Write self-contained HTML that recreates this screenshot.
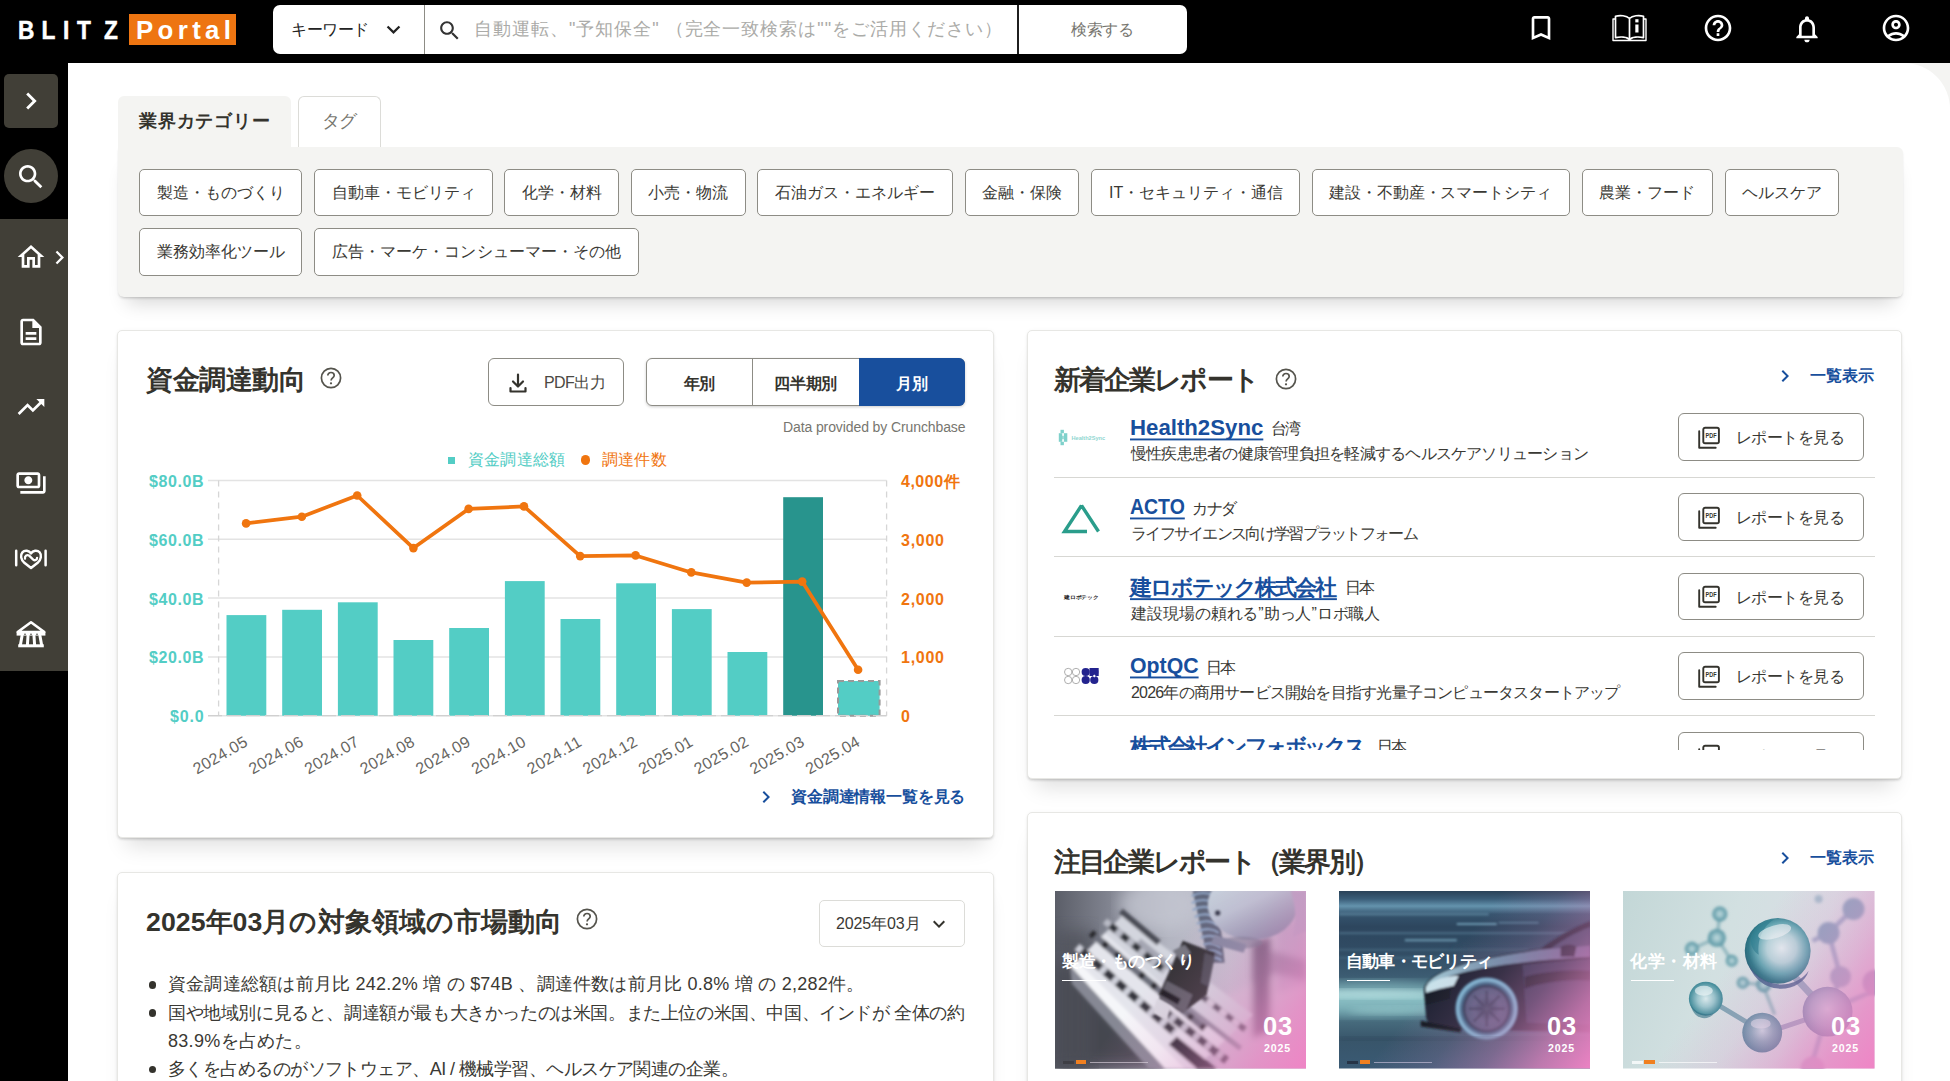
<!DOCTYPE html>
<html lang="ja">
<head>
<meta charset="utf-8">
<title>BLITZ Portal</title>
<style>
*{box-sizing:border-box;margin:0;padding:0}
html,body{width:1950px;height:1081px;overflow:hidden;background:#fff}
body{position:relative;font-family:"Liberation Sans",sans-serif;color:#3a3934;font-size:16px}
.a{position:absolute}
svg{display:block;position:absolute;overflow:visible}
svg text{white-space:pre}
.card{position:absolute;background:#fff;border:1px solid #e7e7e4;border-radius:5px;box-shadow:0 2px 3px -1px rgba(0,0,0,.2),0 17px 20px -9px rgba(0,0,0,.13),0 0 4px rgba(0,0,0,.03)}
.btn{position:absolute;border:1px solid #8d8c85;border-radius:6px;background:#fff}
</style>
</head>
<body>
<!-- ===== base layers ===== -->
<div class="a" style="left:0px;top:0px;width:1950px;height:63px;background:#000"></div>
<div class="a" style="left:0px;top:63px;width:68px;height:1018px;background:#000"></div>
<div class="a" style="left:0px;top:219px;width:68px;height:452px;background:#413f37"></div>
<div class="a" style="left:68px;top:63px;width:1882px;height:1018px;background:#f4f4f2"></div>
<div class="a" style="left:68px;top:63px;width:1882px;height:1018px;background:#fff;border-top-right-radius:46px"></div>
<!-- ===== header ===== -->
<svg style="left:0;top:0" width="130" height="63"><text transform="translate(19.700 39.400) scale(.88 1)" x="-1.900 24.700 49.200 65.200 95.800" y="0" font-family="Liberation Sans, sans-serif" font-size="25.800" font-weight="bold" fill="#fff" stroke="#fff" stroke-width=".5">BLITZ</text></svg>
<div class="a" style="left:129px;top:14.3px;width:107.3px;height:31.2px;background:#ee7511"></div>
<svg style="left:135.6px;top:11.0px" width="95.0" height="38.7"><text x="0" y="28.38" font-family="Liberation Sans, sans-serif" font-size="25.8" font-weight="bold" fill="#fff" textLength="95.0" lengthAdjust="spacing">Portal</text></svg>
<div class="a" style="left:273px;top:5px;width:914px;height:48.6px;background:#fff;border-radius:7px"></div>
<div class="a" style="left:424px;top:5px;width:1px;height:48.6px;background:#8d8c85"></div>
<div class="a" style="left:1017px;top:5px;width:2px;height:48.6px;background:#1f1f1f"></div>
<svg style="left:290.5px;top:16.8px" width="78.0" height="24.0"><text x="0" y="17.60" font-family="Liberation Sans, sans-serif" font-size="16" font-weight="normal" fill="#222" textLength="78.0" lengthAdjust="spacing">キーワード</text></svg>
<svg style="left:380.0px;top:16.1px" width="27" height="27" viewBox="0 0 24 24"><path fill="#222" d="M16.590 8.590L12 13.170 7.410 8.590 6 10l6 6 6-6z"/></svg>
<svg style="left:436.700px;top:17.700px" width="25.250" height="25.250" viewBox="0 0 24 24"><path fill="#333" d="M15.500 14h-.79l-.28-.27C15.410 12.590 16 11.110 16 9.500 16 5.910 13.090 3 9.500 3S3 5.910 3 9.500 5.910 16 9.500 16c1.610 0 3.090-.59 4.230-1.570l.27.28v.79l5 4.990L20.490 19l-4.990-5zm-6 0C7.010 14 5 11.990 5 9.500S7.010 5 9.500 5 14 7.010 14 9.500 11.990 14 9.500 14z"/></svg>
<svg style="left:474.0px;top:15.2px" width="527.9" height="27.0"><text x="0" y="19.80" font-family="Liberation Sans, sans-serif" font-size="18" font-weight="normal" fill="#ababa8" textLength="527.9" lengthAdjust="spacing">自動運転、&quot;予知保全&quot; （完全一致検索は&quot;&quot;をご活用ください）</text></svg>
<svg style="left:1070.7px;top:17.2px" width="62.6" height="24.0"><text x="0" y="17.60" font-family="Liberation Sans, sans-serif" font-size="16" font-weight="normal" fill="#77766f" textLength="62.6" lengthAdjust="spacing">検索する</text></svg>
<svg style="left:1525px;top:12px" width="32" height="32" viewBox="0 0 24 24"><path fill="#fff" d="M17 3H7c-1.100 0-1.990.9-1.990 2L5 21l7-3 7 3V5c0-1.100-.9-2-2-2zm0 15l-5-2.180L7 18V5h10v13z"/></svg>
<svg style="left:1611px;top:13px" width="37" height="30" viewBox="0 0 37 30" fill="none" stroke="#fff" stroke-width="1.700" stroke-linejoin="round"><path d="M18.500 5.500C15.500 2.500 9 2 4.500 3.200V24.600C9 23.600 15.500 23.800 18.500 26.500C21.500 23.800 28 23.600 32.500 24.600V3.200C28 2 21.500 2.500 18.500 5.500zM18.500 5.500V26.500"/><path d="M4.500 6H2V27.500H35V6H32.500" stroke-width="1.400"/><rect x="24.300" y="6.200" width="3.200" height="3.200" fill="#fff" stroke="none"/><path d="M24.300 11.500h3.200v8h-3.200z" fill="#fff" stroke="none"/></svg>
<svg style="left:1702.0px;top:12.0px" width="32" height="32" viewBox="0 0 24 24"><path fill="#fff" d="M11 18h2v-2h-2v2zm1-16C6.480 2 2 6.480 2 12s4.480 10 10 10 10-4.480 10-10S17.520 2 12 2zm0 18c-4.410 0-8-3.590-8-8s3.590-8 8-8 8 3.590 8 8-3.590 8-8 8zm0-14c-2.210 0-4 1.790-4 4h2c0-1.100.9-2 2-2s2 .9 2 2c0 2-3 1.750-3 5h2c0-2.250 3-2.500 3-5 0-2.210-1.790-4-4-4z"/></svg>
<svg style="left:1791px;top:13px" width="32" height="32" viewBox="0 0 24 24"><path fill="#fff" d="M12 22c1.100 0 2-.9 2-2h-4c0 1.100.9 2 2 2zm6-6v-5c0-3.070-1.630-5.640-4.500-6.320V4c0-.83-.67-1.500-1.500-1.500s-1.500.67-1.500 1.500v.68C7.640 5.360 6 7.920 6 11v5l-2 2v1h16v-1l-2-2zm-2 1H8v-6c0-2.480 1.510-4.500 4-4.500s4 2.020 4 4.500v6z"/></svg>
<svg style="left:1880px;top:12px" width="32" height="32" viewBox="0 0 24 24"><path fill="#fff" d="M12 2C6.480 2 2 6.480 2 12s4.480 10 10 10 10-4.480 10-10S17.520 2 12 2zM7.350 18.500C8.660 17.560 10.260 17 12 17s3.340.56 4.650 1.500c-1.310.94-2.910 1.500-4.650 1.500s-3.340-.56-4.650-1.500zm10.790-1.380C16.450 15.800 14.320 15 12 15s-4.450.8-6.140 2.120C4.700 15.730 4 13.950 4 12c0-4.420 3.580-8 8-8s8 3.580 8 8c0 1.950-.7 3.730-1.860 5.120zM12 6c-1.930 0-3.500 1.570-3.500 3.500S10.070 13 12 13s3.500-1.570 3.500-3.500S13.930 6 12 6zm0 5c-.83 0-1.500-.67-1.500-1.500S11.170 8 12 8s1.500.67 1.500 1.500S12.830 11 12 11z"/></svg>
<!-- ===== sidebar ===== -->
<div class="a" style="left:4px;top:74px;width:54px;height:54px;background:#413f37;border-radius:5px"></div>
<svg style="left:14.0px;top:84.0px" width="34" height="34" viewBox="0 0 24 24"><path fill="#fff" d="M10 6L8.590 7.410 13.170 12l-4.580 4.590L10 18l6-6z"/></svg>
<div class="a" style="left:4px;top:149px;width:54px;height:54px;background:#413f37;border-radius:50%"></div>
<svg style="left:15.0px;top:160.5px" width="32" height="32" viewBox="0 0 24 24"><path fill="#fff" d="M15.500 14h-.79l-.28-.27C15.410 12.590 16 11.110 16 9.500 16 5.910 13.090 3 9.500 3S3 5.910 3 9.500 5.910 16 9.500 16c1.610 0 3.090-.59 4.230-1.570l.27.28v.79l5 4.990L20.490 19l-4.990-5zm-6 0C7.010 14 5 11.990 5 9.500S7.010 5 9.500 5 14 7.010 14 9.500 11.990 14 9.500 14z"/></svg>
<svg style="left:15px;top:241px" width="32" height="32" viewBox="0 0 24 24"><path fill="#fff" d="M12 5.690l5 4.500V18h-2v-6H9v6H7v-7.810l5-4.500M12 3L2 12h3v8h6v-6h2v6h6v-8h3L12 3z"/></svg>
<svg style="left:46.3px;top:243.8px" width="27" height="27" viewBox="0 0 24 24"><path fill="#fff" d="M10 6L8.590 7.410 13.170 12l-4.580 4.590L10 18l6-6z"/></svg>
<svg style="left:15px;top:316px" width="32" height="32" viewBox="0 0 24 24"><path fill="#fff" d="M8 16h8v2H8zm0-4h8v2H8zm6-10H6c-1.100 0-2 .9-2 2v16c0 1.100.89 2 1.990 2H18c1.100 0 2-.9 2-2V8l-6-6zm4 18H6V4h7v5h5v11z"/></svg>
<svg style="left:15px;top:391px" width="32" height="32" viewBox="0 0 24 24"><path fill="#fff" d="M16 6l2.290 2.290-4.880 4.880-4-4L2 16.590 3.410 18l6-6 4 4 6.300-6.290L22 12V6z"/></svg>
<svg style="left:15px;top:467px" width="32" height="32" viewBox="0 0 24 24"><path fill="#fff" d="M19 14V6c0-1.100-.9-2-2-2H3c-1.100 0-2 .9-2 2v8c0 1.100.9 2 2 2h14c1.100 0 2-.9 2-2zm-2 0H3V6h14v8zm-7-7c-1.660 0-3 1.340-3 3s1.340 3 3 3 3-1.340 3-3-1.340-3-3-3zm13 0v11c0 1.100-.9 2-2 2H4v-2h17V7h2z"/></svg>
<svg style="left:0;top:540px" width="68" height="36" viewBox="0 540 68 36" fill="none" stroke="#fff" stroke-width="2.500" stroke-linecap="round" stroke-linejoin="round"><path d="M16.200 550.800V565.300M45.600 550.800V565.300"/><path d="M31 553.400C29.200 550.300 24.600 549.800 22.400 552.300 19.900 555.200 21.100 559.600 24 562.400L31 567.900 38 562.400C40.900 559.600 42.100 555.200 39.600 552.300 37.400 549.800 32.800 550.300 31 553.400"/><path d="M25 558.600C24.600 556.200 26.800 554.300 28.900 555.400L33.200 559.600C34.800 560.900 37.100 560 37.100 557.800" stroke-width="2.300"/></svg>
<svg style="left:0;top:616px" width="68" height="36" viewBox="0 616 68 36" fill="none" stroke="#fff" stroke-linejoin="round" stroke-linecap="round"><path d="M31 622.300L17.700 632H44.300Z" stroke-width="2.600"/><path d="M16.600 632.200H45.400V635.600H16.600Z" fill="#fff" stroke="none"/><path d="M22 636L20.400 645M28 636L27.400 645M34 636L34.600 645M40 636L41.600 645" stroke-width="3"/><path d="M18.200 644.300H43.800V647.300H18.200Z" fill="#fff" stroke="none"/><g fill="#413f37" stroke="none"><circle cx="25" cy="634.300" r=".8"/><circle cx="31" cy="634.300" r=".8"/><circle cx="37" cy="634.300" r=".8"/></g></svg>
<!-- ===== category tabs / panel ===== -->
<div class="a" style="left:117.5px;top:147px;width:1785px;height:150px;background:#f4f4f2;border-radius:0 6px 6px 6px;box-shadow:0 2px 3px -1px rgba(0,0,0,.2),0 15px 18px -9px rgba(0,0,0,.16)"></div>
<div class="a" style="left:117.5px;top:96px;width:173.5px;height:52px;background:#f4f4f2;border-radius:6px 6px 0 0"></div>
<div class="a" style="left:297.5px;top:96px;width:83px;height:51px;background:#fff;border:1px solid #dcdcd8;border-bottom:none;border-radius:6px 6px 0 0"></div>
<svg style="left:139.2px;top:107.3px" width="130.6" height="27.6"><text x="0" y="20.24" font-family="Liberation Sans, sans-serif" font-size="18.4" font-weight="bold" fill="#34332d" textLength="130.6" lengthAdjust="spacing">業界カテゴリー</text></svg>
<svg style="left:321.5px;top:107.9px" width="34.7" height="26.4"><text x="0" y="19.36" font-family="Liberation Sans, sans-serif" font-size="17.6" font-weight="normal" fill="#77766f" textLength="34.7" lengthAdjust="spacing">タグ</text></svg>
<div class="btn" style="left:138.8px;top:168.6px;width:163.4px;height:47.600px;border-radius:5px"></div>
<svg style="left:156.5px;top:179.6px" width="128.0" height="24.0"><text x="0" y="17.60" font-family="Liberation Sans, sans-serif" font-size="16" font-weight="normal" fill="#3a3934" textLength="128.0" lengthAdjust="spacing">製造・ものづくり</text></svg>
<div class="btn" style="left:314.2px;top:168.6px;width:178.6px;height:47.600px;border-radius:5px"></div>
<svg style="left:331.5px;top:179.6px" width="144.0" height="24.0"><text x="0" y="17.60" font-family="Liberation Sans, sans-serif" font-size="16" font-weight="normal" fill="#3a3934" textLength="144.0" lengthAdjust="spacing">自動車・モビリティ</text></svg>
<div class="btn" style="left:504.3px;top:168.6px;width:114.9px;height:47.600px;border-radius:5px"></div>
<svg style="left:521.8px;top:179.6px" width="80.0" height="24.0"><text x="0" y="17.60" font-family="Liberation Sans, sans-serif" font-size="16" font-weight="normal" fill="#3a3934" textLength="80.0" lengthAdjust="spacing">化学・材料</text></svg>
<div class="btn" style="left:630.8px;top:168.6px;width:114.9px;height:47.600px;border-radius:5px"></div>
<svg style="left:648.2px;top:179.6px" width="80.0" height="24.0"><text x="0" y="17.60" font-family="Liberation Sans, sans-serif" font-size="16" font-weight="normal" fill="#3a3934" textLength="80.0" lengthAdjust="spacing">小売・物流</text></svg>
<div class="btn" style="left:757.2px;top:168.6px;width:195.7px;height:47.600px;border-radius:5px"></div>
<svg style="left:775.0px;top:179.6px" width="160.0" height="24.0"><text x="0" y="17.60" font-family="Liberation Sans, sans-serif" font-size="16" font-weight="normal" fill="#3a3934" textLength="160.0" lengthAdjust="spacing">石油ガス・エネルギー</text></svg>
<div class="btn" style="left:965.0px;top:168.6px;width:114.4px;height:47.600px;border-radius:5px"></div>
<svg style="left:982.2px;top:179.6px" width="80.0" height="24.0"><text x="0" y="17.60" font-family="Liberation Sans, sans-serif" font-size="16" font-weight="normal" fill="#3a3934" textLength="80.0" lengthAdjust="spacing">金融・保険</text></svg>
<div class="btn" style="left:1091.1px;top:168.6px;width:209.0px;height:47.600px;border-radius:5px"></div>
<svg style="left:1108.8px;top:179.6px" width="173.5" height="24.0"><text x="0" y="17.60" font-family="Liberation Sans, sans-serif" font-size="16" font-weight="normal" fill="#3a3934" textLength="173.5" lengthAdjust="spacing">IT・セキュリティ・通信</text></svg>
<div class="btn" style="left:1311.8px;top:168.6px;width:258.2px;height:47.600px;border-radius:5px"></div>
<svg style="left:1329.4px;top:179.6px" width="223.0" height="24.0"><text x="0" y="17.60" font-family="Liberation Sans, sans-serif" font-size="16" font-weight="normal" fill="#3a3934" textLength="223.0" lengthAdjust="spacing">建設・不動産・スマートシティ</text></svg>
<div class="btn" style="left:1581.7px;top:168.6px;width:131.1px;height:47.600px;border-radius:5px"></div>
<svg style="left:1599.2px;top:179.6px" width="96.0" height="24.0"><text x="0" y="17.60" font-family="Liberation Sans, sans-serif" font-size="16" font-weight="normal" fill="#3a3934" textLength="96.0" lengthAdjust="spacing">農業・フード</text></svg>
<div class="btn" style="left:1724.5px;top:168.6px;width:114.9px;height:47.600px;border-radius:5px"></div>
<svg style="left:1742.0px;top:179.6px" width="80.0" height="24.0"><text x="0" y="17.60" font-family="Liberation Sans, sans-serif" font-size="16" font-weight="normal" fill="#3a3934" textLength="80.0" lengthAdjust="spacing">ヘルスケア</text></svg>
<div class="btn" style="left:138.8px;top:228.2px;width:163.4px;height:47.600px;border-radius:5px"></div>
<svg style="left:156.5px;top:239.2px" width="128.0" height="24.0"><text x="0" y="17.60" font-family="Liberation Sans, sans-serif" font-size="16" font-weight="normal" fill="#3a3934" textLength="128.0" lengthAdjust="spacing">業務効率化ツール</text></svg>
<div class="btn" style="left:314.2px;top:228.2px;width:324.4px;height:47.600px;border-radius:5px"></div>
<svg style="left:331.9px;top:239.2px" width="289.0" height="24.0"><text x="0" y="17.60" font-family="Liberation Sans, sans-serif" font-size="16" font-weight="normal" fill="#3a3934" textLength="289.0" lengthAdjust="spacing">広告・マーケ・コンシューマー・その他</text></svg>
<!-- ===== funding chart card ===== -->
<div class="card" style="left:117px;top:329.800px;width:877px;height:508.200px"></div>
<svg style="left:146.0px;top:359.9px" width="160.0" height="40.0"><text x="0" y="29.34" font-family="Liberation Sans, sans-serif" font-size="26.67" font-weight="bold" fill="#34332d" textLength="160.0" lengthAdjust="spacing">資金調達動向</text></svg>
<svg style="left:320.0px;top:367.0px" width="22" height="22" viewBox="0 0 22 22"><circle cx="11" cy="11" r="9.600" fill="none" stroke="#55544d" stroke-width="1.700"/><path d="M7.800 8.600c0-1.900 1.400-3.100 3.200-3.100s3.200 1.200 3.200 2.900c0 2.400-3.100 2.600-3.100 5.100" fill="none" stroke="#55544d" stroke-width="1.700"/><circle cx="11" cy="16.300" r="1.150" fill="#55544d"/></svg>
<div class="btn" style="left:488px;top:358.300px;width:135.600px;height:47.700px"></div>
<svg style="left:506px;top:370.500px" width="24" height="24" viewBox="0 0 24 24" fill="none" stroke="#34332d" stroke-width="2.200" stroke-linecap="round" stroke-linejoin="round"><path d="M12 3.500v11.500M7 10.500l5 5 5-5M4.500 17v3.500h15V17"/></svg>
<svg style="left:544.1px;top:370.4px" width="61.5" height="24.0"><text x="0" y="17.60" font-family="Liberation Sans, sans-serif" font-size="16" font-weight="normal" fill="#4a4943" textLength="61.5" lengthAdjust="spacing">PDF出力</text></svg>
<div class="btn" style="left:645.900px;top:358.300px;width:318.800px;height:47.700px;box-shadow:0 1px 3px rgba(0,0,0,.2)"></div>
<div class="a" style="left:752px;top:359.3px;width:1px;height:45.7px;background:#8d8c85"></div>
<div class="a" style="left:859px;top:358.3px;width:105.7px;height:47.7px;background:#184f9d;border-radius:0 6px 6px 0"></div>
<svg style="left:683.8px;top:370.6px" width="30.8" height="24.0"><text x="0" y="17.60" font-family="Liberation Sans, sans-serif" font-size="16" font-weight="bold" fill="#34332d" textLength="30.8" lengthAdjust="spacing">年別</text></svg>
<svg style="left:773.6px;top:370.6px" width="63.3" height="24.0"><text x="0" y="17.60" font-family="Liberation Sans, sans-serif" font-size="16" font-weight="bold" fill="#34332d" textLength="63.3" lengthAdjust="spacing">四半期別</text></svg>
<svg style="left:895.9px;top:370.6px" width="31.5" height="24.0"><text x="0" y="17.60" font-family="Liberation Sans, sans-serif" font-size="16" font-weight="bold" fill="#fff" textLength="31.5" lengthAdjust="spacing">月別</text></svg>
<svg style="left:782.6px;top:417.1px" width="182.5" height="21.0"><text x="0" y="15.40" font-family="Liberation Sans, sans-serif" font-size="14" font-weight="normal" fill="#77766f" textLength="182.5" lengthAdjust="spacing">Data provided by Crunchbase</text></svg>
<div class="a" style="left:448.3px;top:457px;width:6.6px;height:6.6px;background:#53cdc5"></div>
<svg style="left:467.7px;top:447.0px" width="96.9" height="24.0"><text x="0" y="17.60" font-family="Liberation Sans, sans-serif" font-size="16" font-weight="normal" fill="#53cdc5" textLength="96.9" lengthAdjust="spacing">資金調達総額</text></svg>
<div class="a" style="left:580.8px;top:455.4px;width:9.2px;height:9.2px;background:#f0750f;border-radius:50%"></div>
<svg style="left:601.5px;top:447.0px" width="64.6" height="24.0"><text x="0" y="17.60" font-family="Liberation Sans, sans-serif" font-size="16" font-weight="normal" fill="#f0750f" textLength="64.6" lengthAdjust="spacing">調達件数</text></svg>
<svg style="left:0;top:440px" width="1000" height="360" viewBox="0 440 1000 360"><path d="M208 480.5H886.6" stroke="#e3e3e3" stroke-width="1.500"/><path d="M208 539.3H886.6" stroke="#e3e3e3" stroke-width="1.500"/><path d="M208 598.1H886.6" stroke="#e3e3e3" stroke-width="1.500"/><path d="M208 656.9H886.6" stroke="#e3e3e3" stroke-width="1.500"/><path d="M208 715.7H886.6" stroke="#e3e3e3" stroke-width="1.500"/><path d="M218.6 480.5V715.7M886.6 480.5V715.7" stroke="#d6d6d6" stroke-width="1.300" stroke-dasharray="6 5" fill="none"/><rect x="226.5" y="615.1" width="39.800" height="100.6" fill="#53cdc5"/><rect x="282.2" y="609.8" width="39.800" height="105.9" fill="#53cdc5"/><rect x="337.9" y="602.3" width="39.800" height="113.4" fill="#53cdc5"/><rect x="393.5" y="640.0" width="39.800" height="75.7" fill="#53cdc5"/><rect x="449.2" y="628.0" width="39.800" height="87.7" fill="#53cdc5"/><rect x="504.9" y="581.1" width="39.800" height="134.6" fill="#53cdc5"/><rect x="560.5" y="619.0" width="39.800" height="96.7" fill="#53cdc5"/><rect x="616.2" y="583.3" width="39.800" height="132.4" fill="#53cdc5"/><rect x="671.9" y="609.1" width="39.800" height="106.6" fill="#53cdc5"/><rect x="727.5" y="652.0" width="39.800" height="63.7" fill="#53cdc5"/><rect x="783.2" y="497.2" width="39.800" height="218.5" fill="#28948d"/><rect x="838.0" y="681.0" width="41.600" height="34.7" fill="#53cdc5" stroke="#999" stroke-width="2" stroke-dasharray="6 4"/><path d="M208 715.7H886.6" stroke="#d0d0d0" stroke-width="1.200" stroke-dasharray="14 5"/><path d="M246.1 523.4 L301.8 516.7 L357.2 495.5 L413.4 548.1 L468.6 508.9 L524.0 506.4 L580.2 556.1 L635.6 555.4 L691.3 572.4 L746.7 582.6 L802.2 581.6 L858.1 669.7" fill="none" stroke="#f0750f" stroke-width="3.700" stroke-linejoin="round" stroke-linecap="round"/><circle cx="246.1" cy="523.4" r="4.300" fill="#f0750f"/><circle cx="301.8" cy="516.7" r="4.300" fill="#f0750f"/><circle cx="357.2" cy="495.5" r="4.300" fill="#f0750f"/><circle cx="413.4" cy="548.1" r="4.300" fill="#f0750f"/><circle cx="468.6" cy="508.9" r="4.300" fill="#f0750f"/><circle cx="524.0" cy="506.4" r="4.300" fill="#f0750f"/><circle cx="580.2" cy="556.1" r="4.300" fill="#f0750f"/><circle cx="635.6" cy="555.4" r="4.300" fill="#f0750f"/><circle cx="691.3" cy="572.4" r="4.300" fill="#f0750f"/><circle cx="746.7" cy="582.6" r="4.300" fill="#f0750f"/><circle cx="802.2" cy="581.6" r="4.300" fill="#f0750f"/><circle cx="858.1" cy="669.7" r="4.300" fill="#f0750f"/><text transform="translate(245.9 740.3) rotate(-30)" x="-59.500" y="5.500" font-family="Liberation Sans, sans-serif" font-size="16" fill="#66655f" textLength="59.500" lengthAdjust="spacing">2024.05</text><text transform="translate(301.6 740.3) rotate(-30)" x="-59.500" y="5.500" font-family="Liberation Sans, sans-serif" font-size="16" fill="#66655f" textLength="59.500" lengthAdjust="spacing">2024.06</text><text transform="translate(357.3 740.3) rotate(-30)" x="-59.500" y="5.500" font-family="Liberation Sans, sans-serif" font-size="16" fill="#66655f" textLength="59.500" lengthAdjust="spacing">2024.07</text><text transform="translate(412.9 740.3) rotate(-30)" x="-59.500" y="5.500" font-family="Liberation Sans, sans-serif" font-size="16" fill="#66655f" textLength="59.500" lengthAdjust="spacing">2024.08</text><text transform="translate(468.6 740.3) rotate(-30)" x="-59.500" y="5.500" font-family="Liberation Sans, sans-serif" font-size="16" fill="#66655f" textLength="59.500" lengthAdjust="spacing">2024.09</text><text transform="translate(524.3 740.3) rotate(-30)" x="-59.500" y="5.500" font-family="Liberation Sans, sans-serif" font-size="16" fill="#66655f" textLength="59.500" lengthAdjust="spacing">2024.10</text><text transform="translate(579.9 740.3) rotate(-30)" x="-59.500" y="5.500" font-family="Liberation Sans, sans-serif" font-size="16" fill="#66655f" textLength="59.500" lengthAdjust="spacing">2024.11</text><text transform="translate(635.6 740.3) rotate(-30)" x="-59.500" y="5.500" font-family="Liberation Sans, sans-serif" font-size="16" fill="#66655f" textLength="59.500" lengthAdjust="spacing">2024.12</text><text transform="translate(691.3 740.3) rotate(-30)" x="-59.500" y="5.500" font-family="Liberation Sans, sans-serif" font-size="16" fill="#66655f" textLength="59.500" lengthAdjust="spacing">2025.01</text><text transform="translate(746.9 740.3) rotate(-30)" x="-59.500" y="5.500" font-family="Liberation Sans, sans-serif" font-size="16" fill="#66655f" textLength="59.500" lengthAdjust="spacing">2025.02</text><text transform="translate(802.6 740.3) rotate(-30)" x="-59.500" y="5.500" font-family="Liberation Sans, sans-serif" font-size="16" fill="#66655f" textLength="59.500" lengthAdjust="spacing">2025.03</text><text transform="translate(858.3 740.3) rotate(-30)" x="-59.500" y="5.500" font-family="Liberation Sans, sans-serif" font-size="16" fill="#66655f" textLength="59.500" lengthAdjust="spacing">2025.04</text></svg>
<svg style="left:149.2px;top:468.9px" width="54.5" height="24.0"><text x="0" y="17.60" font-family="Liberation Sans, sans-serif" font-size="16" font-weight="bold" fill="#53cdc5" textLength="54.5" lengthAdjust="spacing">$80.0B</text></svg>
<svg style="left:149.2px;top:527.7px" width="54.5" height="24.0"><text x="0" y="17.60" font-family="Liberation Sans, sans-serif" font-size="16" font-weight="bold" fill="#53cdc5" textLength="54.5" lengthAdjust="spacing">$60.0B</text></svg>
<svg style="left:149.2px;top:586.5px" width="54.5" height="24.0"><text x="0" y="17.60" font-family="Liberation Sans, sans-serif" font-size="16" font-weight="bold" fill="#53cdc5" textLength="54.5" lengthAdjust="spacing">$40.0B</text></svg>
<svg style="left:149.2px;top:645.3px" width="54.5" height="24.0"><text x="0" y="17.60" font-family="Liberation Sans, sans-serif" font-size="16" font-weight="bold" fill="#53cdc5" textLength="54.5" lengthAdjust="spacing">$20.0B</text></svg>
<svg style="left:170.0px;top:704.1px" width="33.7" height="24.0"><text x="0" y="17.60" font-family="Liberation Sans, sans-serif" font-size="16" font-weight="bold" fill="#53cdc5" textLength="33.7" lengthAdjust="spacing">$0.0</text></svg>
<svg style="left:900.6px;top:468.9px" width="58.6" height="24.0"><text x="0" y="17.60" font-family="Liberation Sans, sans-serif" font-size="16" font-weight="bold" fill="#f0750f" textLength="58.6" lengthAdjust="spacing">4,000件</text></svg>
<svg style="left:900.6px;top:527.7px" width="43.0" height="24.0"><text x="0" y="17.60" font-family="Liberation Sans, sans-serif" font-size="16" font-weight="bold" fill="#f0750f" textLength="43.0" lengthAdjust="spacing">3,000</text></svg>
<svg style="left:900.6px;top:586.5px" width="43.0" height="24.0"><text x="0" y="17.60" font-family="Liberation Sans, sans-serif" font-size="16" font-weight="bold" fill="#f0750f" textLength="43.0" lengthAdjust="spacing">2,000</text></svg>
<svg style="left:900.6px;top:645.3px" width="43.0" height="24.0"><text x="0" y="17.60" font-family="Liberation Sans, sans-serif" font-size="16" font-weight="bold" fill="#f0750f" textLength="43.0" lengthAdjust="spacing">1,000</text></svg>
<svg style="left:900.6px;top:704.1px" width="9.0" height="24.0"><text x="0" y="17.60" font-family="Liberation Sans, sans-serif" font-size="16" font-weight="bold" fill="#f0750f" textLength="9.0" lengthAdjust="spacing">0</text></svg>
<svg style="left:753.5px;top:784.5px" width="24" height="24" viewBox="0 0 24 24"><path fill="#184f9d" d="M10 6L8.590 7.410 13.170 12l-4.580 4.590L10 18l6-6z"/></svg>
<svg style="left:790.8px;top:783.7px" width="174.4" height="24.0"><text x="0" y="17.60" font-family="Liberation Sans, sans-serif" font-size="16" font-weight="bold" fill="#184f9d" textLength="174.4" lengthAdjust="spacing">資金調達情報一覧を見る</text></svg>
<!-- ===== market trend card ===== -->
<div class="card" style="left:117px;top:871.500px;width:877px;height:260px"></div>
<svg style="left:146.0px;top:902.3px" width="416.0" height="40.0"><text x="0" y="29.34" font-family="Liberation Sans, sans-serif" font-size="26.67" font-weight="bold" fill="#34332d" textLength="416.0" lengthAdjust="spacing">2025年03月の対象領域の市場動向</text></svg>
<svg style="left:575.8px;top:908.4px" width="22" height="22" viewBox="0 0 22 22"><circle cx="11" cy="11" r="9.600" fill="none" stroke="#55544d" stroke-width="1.700"/><path d="M7.800 8.600c0-1.900 1.400-3.100 3.200-3.100s3.200 1.200 3.200 2.900c0 2.400-3.100 2.600-3.100 5.100" fill="none" stroke="#55544d" stroke-width="1.700"/><circle cx="11" cy="16.300" r="1.150" fill="#55544d"/></svg>
<div class="btn" style="left:818.500px;top:900px;width:146.500px;height:47px;border-color:#dcdcd8;border-radius:5px"></div>
<svg style="left:835.5px;top:910.7px" width="84.5" height="24.0"><text x="0" y="17.60" font-family="Liberation Sans, sans-serif" font-size="16" font-weight="normal" fill="#3a3934" textLength="84.5" lengthAdjust="spacing">2025年03月</text></svg>
<svg style="left:926.5px;top:911.5px" width="24" height="24" viewBox="0 0 24 24"><path fill="#34332d" d="M16.590 8.590L12 13.170 7.410 8.590 6 10l6 6 6-6z"/></svg>
<div class="a" style="left:148.5px;top:980.8px;width:7.8px;height:7.8px;background:#34332d;border-radius:50%"></div>
<div class="a" style="left:148.5px;top:1009.3px;width:7.8px;height:7.8px;background:#34332d;border-radius:50%"></div>
<div class="a" style="left:148.5px;top:1065.7px;width:7.8px;height:7.8px;background:#34332d;border-radius:50%"></div>
<svg style="left:167.7px;top:970.1px" width="696.2" height="27.0"><text x="0" y="19.80" font-family="Liberation Sans, sans-serif" font-size="18" font-weight="normal" fill="#3a3934" textLength="696.2" lengthAdjust="spacing">資金調達総額は前月比 242.2% 増 の $74B 、調達件数は前月比 0.8% 増 の 2,282件。</text></svg>
<svg style="left:167.7px;top:998.6px" width="797.1" height="27.0"><text x="0" y="19.80" font-family="Liberation Sans, sans-serif" font-size="18" font-weight="normal" fill="#3a3934" textLength="797.1" lengthAdjust="spacing">国や地域別に見ると、調達額が最も大きかったのは米国。また上位の米国、中国、インドが 全体の約</text></svg>
<svg style="left:167.7px;top:1027.3px" width="143.7" height="27.0"><text x="0" y="19.80" font-family="Liberation Sans, sans-serif" font-size="18" font-weight="normal" fill="#3a3934" textLength="143.7" lengthAdjust="spacing">83.9%を占めた。</text></svg>
<svg style="left:167.7px;top:1055.0px" width="570.7" height="27.0"><text x="0" y="19.80" font-family="Liberation Sans, sans-serif" font-size="18" font-weight="normal" fill="#3a3934" textLength="570.7" lengthAdjust="spacing">多くを占めるのがソフトウェア、AI / 機械学習、ヘルスケア関連の企業。</text></svg>
<!-- ===== new company reports card ===== -->
<div class="card" style="left:1026.700px;top:330px;width:875.300px;height:449px"></div>
<svg style="left:1054.3px;top:360.0px" width="205.6" height="40.0"><text x="0" y="29.34" font-family="Liberation Sans, sans-serif" font-size="26.67" font-weight="bold" fill="#34332d" textLength="205.6" lengthAdjust="spacing">新着企業レポート</text></svg>
<svg style="left:1274.6px;top:367.7px" width="22" height="22" viewBox="0 0 22 22"><circle cx="11" cy="11" r="9.600" fill="none" stroke="#55544d" stroke-width="1.700"/><path d="M7.800 8.600c0-1.900 1.400-3.100 3.200-3.100s3.200 1.200 3.200 2.900c0 2.400-3.100 2.600-3.100 5.100" fill="none" stroke="#55544d" stroke-width="1.700"/><circle cx="11" cy="16.300" r="1.150" fill="#55544d"/></svg>
<svg style="left:1773.0px;top:364.0px" width="24" height="24" viewBox="0 0 24 24"><path fill="#184f9d" d="M10 6L8.590 7.410 13.170 12l-4.580 4.590L10 18l6-6z"/></svg>
<svg style="left:1810.2px;top:363.2px" width="63.9" height="24.0"><text x="0" y="17.60" font-family="Liberation Sans, sans-serif" font-size="16" font-weight="bold" fill="#184f9d" textLength="63.9" lengthAdjust="spacing">一覧表示</text></svg>
<div class="a" style="left:1040px;top:397px;width:850px;height:353.300px;overflow:hidden"><div class="a" style="left:-1040px;top:-397px;width:1950px;height:1081px">
<svg style="left:1058px;top:428.0px" width="50" height="20" viewBox="0 0 50 20"><g fill="#7fd1cb"><rect x="2.500" y="1.800" width="3.400" height="3.400"/><rect x="0.800" y="5.200" width="3.400" height="8.600"/><rect x="5.900" y="5.200" width="3.400" height="8.600"/><rect x="2.500" y="7.800" width="3.400" height="3.400" opacity=".8"/><rect x="2.500" y="13.800" width="3.400" height="3.400"/></g><text x="13.500" y="12.300" font-family="Liberation Sans, sans-serif" font-weight="bold" font-size="5.600" fill="#8fd6d1" textLength="33.500" lengthAdjust="spacingAndGlyphs">Health2Sync</text></svg>
<svg style="left:1130.2px;top:410.6px" width="133.3" height="32.7"><text x="0" y="23.98" font-family="Liberation Sans, sans-serif" font-size="21.8" font-weight="bold" fill="#184f9d" textLength="133.3" lengthAdjust="spacingAndGlyphs">Health2Sync</text><rect x="0" y="27.5" width="133.3" height="1.9" fill="#184f9d"/></svg>
<svg style="left:1271.3px;top:416.1px" width="30.1" height="24.0"><text x="0" y="17.60" font-family="Liberation Sans, sans-serif" font-size="16" font-weight="normal" fill="#3a3934" textLength="30.1" lengthAdjust="spacing">台湾</text></svg>
<svg style="left:1130.6px;top:441.4px" width="457.9" height="24.0"><text x="0" y="17.60" font-family="Liberation Sans, sans-serif" font-size="16" font-weight="normal" fill="#3a3934" textLength="457.9" lengthAdjust="spacing">慢性疾患患者の健康管理負担を軽減するヘルスケアソリューション</text></svg>
<div class="btn" style="left:1678.200px;top:413.4px;width:185.500px;height:47.800px"></div>
<svg style="left:1696.7px;top:426.1px" width="24" height="24" viewBox="0 0 24 24"><path d="M2.200 5.300V21.800H18.700" fill="none" stroke="#34332d" stroke-width="1.900" stroke-linecap="round" stroke-linejoin="round"/><rect x="6.300" y="1.700" width="15.600" height="15.600" rx="1.800" fill="none" stroke="#34332d" stroke-width="1.900"/><text x="8.600" y="12.300" font-family="Liberation Sans, sans-serif" font-weight="bold" font-size="7" fill="#34332d" textLength="11" lengthAdjust="spacingAndGlyphs">PDF</text></svg>
<svg style="left:1735.7px;top:425.4px" width="108.9" height="24.0"><text x="0" y="17.60" font-family="Liberation Sans, sans-serif" font-size="16" font-weight="normal" fill="#3a3934" textLength="108.9" lengthAdjust="spacing">レポートを見る</text></svg>
<div class="a" style="left:1054.3px;top:476.7px;width:820.5px;height:1.2px;background:#d7d7d3"></div>
<svg style="left:1058px;top:499.6px" width="50" height="40" viewBox="0 0 50 40"><path d="M23.500 5.500L6.500 31.500H29M23.500 5.500L40.500 31.500" fill="none" stroke="#2a9d8b" stroke-width="3.400" stroke-linejoin="miter"/></svg>
<svg style="left:1130.2px;top:490.2px" width="54.8" height="32.7"><text x="0" y="23.98" font-family="Liberation Sans, sans-serif" font-size="21.8" font-weight="bold" fill="#184f9d" textLength="54.8" lengthAdjust="spacingAndGlyphs">ACTO</text><rect x="0" y="27.5" width="54.8" height="1.9" fill="#184f9d"/></svg>
<svg style="left:1191.7px;top:495.6px" width="45.3" height="24.0"><text x="0" y="17.60" font-family="Liberation Sans, sans-serif" font-size="16" font-weight="normal" fill="#3a3934" textLength="45.3" lengthAdjust="spacing">カナダ</text></svg>
<svg style="left:1130.6px;top:520.9px" width="287.6" height="24.0"><text x="0" y="17.60" font-family="Liberation Sans, sans-serif" font-size="16" font-weight="normal" fill="#3a3934" textLength="287.6" lengthAdjust="spacing">ライフサイエンス向け学習プラットフォーム</text></svg>
<div class="btn" style="left:1678.200px;top:492.9px;width:185.500px;height:47.800px"></div>
<svg style="left:1696.7px;top:505.6px" width="24" height="24" viewBox="0 0 24 24"><path d="M2.200 5.300V21.800H18.700" fill="none" stroke="#34332d" stroke-width="1.900" stroke-linecap="round" stroke-linejoin="round"/><rect x="6.300" y="1.700" width="15.600" height="15.600" rx="1.800" fill="none" stroke="#34332d" stroke-width="1.900"/><text x="8.600" y="12.300" font-family="Liberation Sans, sans-serif" font-weight="bold" font-size="7" fill="#34332d" textLength="11" lengthAdjust="spacingAndGlyphs">PDF</text></svg>
<svg style="left:1735.7px;top:504.9px" width="108.9" height="24.0"><text x="0" y="17.60" font-family="Liberation Sans, sans-serif" font-size="16" font-weight="normal" fill="#3a3934" textLength="108.9" lengthAdjust="spacing">レポートを見る</text></svg>
<div class="a" style="left:1054.3px;top:556.2px;width:820.5px;height:1.2px;background:#d7d7d3"></div>
<svg style="left:1058px;top:587.1px" width="50" height="20" viewBox="0 0 50 20"><text x="6" y="11.600" font-family="Liberation Sans, sans-serif" font-weight="bold" font-size="5.400" fill="#222" textLength="34.800" lengthAdjust="spacingAndGlyphs">建ロボテック</text></svg>
<svg style="left:1130.2px;top:569.6px" width="206.9" height="33.6"><text x="0" y="24.64" font-family="Liberation Sans, sans-serif" font-size="22.4" font-weight="bold" fill="#184f9d" textLength="206.9" lengthAdjust="spacing">建ロボテック株式会社</text><rect x="0" y="28.2" width="206.9" height="1.9" fill="#184f9d"/></svg>
<svg style="left:1345.3px;top:575.2px" width="30.0" height="24.0"><text x="0" y="17.60" font-family="Liberation Sans, sans-serif" font-size="16" font-weight="normal" fill="#3a3934" textLength="30.0" lengthAdjust="spacing">日本</text></svg>
<svg style="left:1130.6px;top:600.5px" width="249.4" height="24.0"><text x="0" y="17.60" font-family="Liberation Sans, sans-serif" font-size="16" font-weight="normal" fill="#3a3934" textLength="249.4" lengthAdjust="spacing">建設現場の頼れる”助っ人”ロボ職人</text></svg>
<div class="btn" style="left:1678.200px;top:572.5px;width:185.500px;height:47.800px"></div>
<svg style="left:1696.7px;top:585.2px" width="24" height="24" viewBox="0 0 24 24"><path d="M2.200 5.300V21.800H18.700" fill="none" stroke="#34332d" stroke-width="1.900" stroke-linecap="round" stroke-linejoin="round"/><rect x="6.300" y="1.700" width="15.600" height="15.600" rx="1.800" fill="none" stroke="#34332d" stroke-width="1.900"/><text x="8.600" y="12.300" font-family="Liberation Sans, sans-serif" font-weight="bold" font-size="7" fill="#34332d" textLength="11" lengthAdjust="spacingAndGlyphs">PDF</text></svg>
<svg style="left:1735.7px;top:584.5px" width="108.9" height="24.0"><text x="0" y="17.60" font-family="Liberation Sans, sans-serif" font-size="16" font-weight="normal" fill="#3a3934" textLength="108.9" lengthAdjust="spacing">レポートを見る</text></svg>
<div class="a" style="left:1054.3px;top:635.8px;width:820.5px;height:1.2px;background:#d7d7d3"></div>
<svg style="left:1058px;top:658.6px" width="50" height="40" viewBox="0 0 50 40"><g fill="none" stroke="#9b9b9b" stroke-width=".8"><circle cx="10.200" cy="13" r="3.700"/><circle cx="18" cy="13" r="3.700"/><circle cx="10.200" cy="21" r="3.700"/><circle cx="18" cy="21" r="3.700"/></g><g fill="#23238e"><circle cx="27.700" cy="13" r="4.100"/><path d="M31.500 9h9.200v8h-9.200z"/><circle cx="27.700" cy="21" r="4.100"/><circle cx="36.300" cy="21" r="4.100"/><circle cx="36.300" cy="13" r="4.100"/></g><path d="M36.300 15.500l1.500 1.500-1.500 1.500-1.500-1.500z" fill="#fff"/></svg>
<svg style="left:1130.2px;top:649.3px" width="68.6" height="32.7"><text x="0" y="23.98" font-family="Liberation Sans, sans-serif" font-size="21.8" font-weight="bold" fill="#184f9d" textLength="68.6" lengthAdjust="spacingAndGlyphs">OptQC</text><rect x="0" y="27.5" width="68.6" height="1.9" fill="#184f9d"/></svg>
<svg style="left:1206.0px;top:654.7px" width="30.0" height="24.0"><text x="0" y="17.60" font-family="Liberation Sans, sans-serif" font-size="16" font-weight="normal" fill="#3a3934" textLength="30.0" lengthAdjust="spacing">日本</text></svg>
<svg style="left:1130.6px;top:680.0px" width="489.4" height="24.0"><text x="0" y="17.60" font-family="Liberation Sans, sans-serif" font-size="16" font-weight="normal" fill="#3a3934" textLength="489.4" lengthAdjust="spacing">2026年の商用サービス開始を目指す光量子コンピュータスタートアップ</text></svg>
<div class="btn" style="left:1678.200px;top:652.0px;width:185.500px;height:47.800px"></div>
<svg style="left:1696.7px;top:664.8px" width="24" height="24" viewBox="0 0 24 24"><path d="M2.200 5.300V21.800H18.700" fill="none" stroke="#34332d" stroke-width="1.900" stroke-linecap="round" stroke-linejoin="round"/><rect x="6.300" y="1.700" width="15.600" height="15.600" rx="1.800" fill="none" stroke="#34332d" stroke-width="1.900"/><text x="8.600" y="12.300" font-family="Liberation Sans, sans-serif" font-weight="bold" font-size="7" fill="#34332d" textLength="11" lengthAdjust="spacingAndGlyphs">PDF</text></svg>
<svg style="left:1735.7px;top:664.0px" width="108.9" height="24.0"><text x="0" y="17.60" font-family="Liberation Sans, sans-serif" font-size="16" font-weight="normal" fill="#3a3934" textLength="108.9" lengthAdjust="spacing">レポートを見る</text></svg>
<div class="a" style="left:1054.3px;top:715.3px;width:820.5px;height:1.2px;background:#d7d7d3"></div>
<svg style="left:1130.2px;top:728.7px" width="237.0" height="33.6"><text x="0" y="24.64" font-family="Liberation Sans, sans-serif" font-size="22.4" font-weight="bold" fill="#184f9d" textLength="237.0" lengthAdjust="spacing">株式会社インフォボックス</text><rect x="0" y="28.2" width="237.0" height="1.9" fill="#184f9d"/></svg>
<svg style="left:1376.7px;top:734.3px" width="29.6" height="24.0"><text x="0" y="17.60" font-family="Liberation Sans, sans-serif" font-size="16" font-weight="normal" fill="#3a3934" textLength="29.6" lengthAdjust="spacing">日本</text></svg>
<div class="btn" style="left:1678.200px;top:731.6px;width:185.500px;height:47.800px"></div>
<svg style="left:1696.7px;top:744.3px" width="24" height="24" viewBox="0 0 24 24"><path d="M2.200 5.300V21.800H18.700" fill="none" stroke="#34332d" stroke-width="1.900" stroke-linecap="round" stroke-linejoin="round"/><rect x="6.300" y="1.700" width="15.600" height="15.600" rx="1.800" fill="none" stroke="#34332d" stroke-width="1.900"/><text x="8.600" y="12.300" font-family="Liberation Sans, sans-serif" font-weight="bold" font-size="7" fill="#34332d" textLength="11" lengthAdjust="spacingAndGlyphs">PDF</text></svg>
<svg style="left:1735.7px;top:743.6px" width="108.9" height="24.0"><text x="0" y="17.60" font-family="Liberation Sans, sans-serif" font-size="16" font-weight="normal" fill="#3a3934" textLength="108.9" lengthAdjust="spacing">レポートを見る</text></svg>
</div></div>
<!-- ===== featured reports card ===== -->
<div class="card" style="left:1026.700px;top:812px;width:875.300px;height:300px"></div>
<svg style="left:1054.3px;top:841.9px" width="326.4" height="40.0"><text x="0" y="29.34" font-family="Liberation Sans, sans-serif" font-size="26.67" font-weight="bold" fill="#34332d" textLength="326.4" lengthAdjust="spacing">注目企業レポート（業界別）</text></svg>
<svg style="left:1773.0px;top:846.0px" width="24" height="24" viewBox="0 0 24 24"><path fill="#184f9d" d="M10 6L8.590 7.410 13.170 12l-4.580 4.590L10 18l6-6z"/></svg>
<svg style="left:1810.2px;top:845.2px" width="63.9" height="24.0"><text x="0" y="17.60" font-family="Liberation Sans, sans-serif" font-size="16" font-weight="bold" fill="#184f9d" textLength="63.9" lengthAdjust="spacing">一覧表示</text></svg>
<!-- ===== thumbnails ===== -->
<!-- thumb 1 : manufacturing -->
<svg style="left:1054.5px;top:891px;overflow:hidden" width="251.500" height="177.500" viewBox="0 0 252 178" preserveAspectRatio="none">
<defs>
<linearGradient id="t1bg" x1="0" y1="0" x2="1" y2="0"><stop offset="0" stop-color="#5b5e68"/><stop offset=".2" stop-color="#7e818d"/><stop offset=".45" stop-color="#b3b5c1"/><stop offset=".7" stop-color="#c5c2d0"/><stop offset="1" stop-color="#cdb6cf"/></linearGradient>
<linearGradient id="t1pk" x1="0" y1="0" x2="1.193" y2=".642"><stop offset="0" stop-color="#e683c0" stop-opacity="0"/><stop offset=".42" stop-color="#e683c0" stop-opacity="0"/><stop offset=".58" stop-color="#dd88c2" stop-opacity=".15"/><stop offset=".72" stop-color="#e085c1" stop-opacity=".4"/><stop offset=".86" stop-color="#e884c2" stop-opacity=".75"/><stop offset="1" stop-color="#f083c5" stop-opacity=".98"/></linearGradient>
<linearGradient id="t1arm" x1="0" y1="0" x2=".6" y2="1"><stop offset="0" stop-color="#d0d6e1"/><stop offset=".55" stop-color="#bcc4d3"/><stop offset="1" stop-color="#8a8fa9"/></linearGradient>
<filter id="b1"><feGaussianBlur stdDeviation="1"/></filter><filter id="b2"><feGaussianBlur stdDeviation="1.700"/></filter>
<filter id="b3"><feGaussianBlur stdDeviation="3.500"/></filter>
<filter id="b6"><feGaussianBlur stdDeviation="8"/></filter>
</defs>
<rect width="252" height="178" fill="url(#t1bg)"/>
<path d="M0 70L20 80 112 178H0z" fill="#45464f" filter="url(#b6)"/>
<path d="M0 40h40v140H0z" fill="#4d4f58" opacity=".7" filter="url(#b6)"/>
<ellipse cx="105" cy="14" rx="40" ry="26" fill="#c5c7d2" opacity=".75" filter="url(#b6)"/>
<!-- background machinery right -->
<g filter="url(#b3)"><path d="M160 110l50-22 42 6v84h-92z" fill="#d2c5d6" opacity=".85"/><path d="M198 52l18-6v96l-18 6z" fill="#5f4767" opacity=".8"/><path d="M222 36l30-12v70l-30 8z" fill="#b79dbd" opacity=".55"/><path d="M216 60l36 10v20l-36-8z" fill="#7b5d82" opacity=".5"/></g>
<!-- plate -->
<g filter="url(#b2)">
<path d="M20 72L68 24 198 124 140 178H112z" fill="#d3d5de"/>
<path d="M20 72l30-30 120 108-30 28H112z" fill="#e4e5ec"/>
<path d="M15 75l7-5L130 178h-20z" fill="#f5f6f9"/>
<path d="M15 75L110 178H94L17 93z" fill="#868894"/>
<g fill="none">
<path d="M22 56L120 142" stroke="#34353c" stroke-width="8"/>
<path d="M22 56L120 142" stroke="#d0d2dc" stroke-width="8" stroke-dasharray="6 10"/>
<path d="M36 42L150 138" stroke="#6d6f7b" stroke-width="7"/>
<path d="M36 42L150 138" stroke="#25262c" stroke-width="7" stroke-dasharray="5 11"/>
<path d="M50 30L110 80" stroke="#2f3037" stroke-width="7"/>
<path d="M50 30L110 80" stroke="#b9bbc6" stroke-width="7" stroke-dasharray="7 8"/>
<path d="M66 20L104 52" stroke="#4a4b54" stroke-width="6"/>
<path d="M84 50L128 86" stroke="#a4a6b2" stroke-width="6"/>
<path d="M104 116L172 170" stroke="#3d3d47" stroke-width="8"/>
<path d="M104 116L172 170" stroke="#c4c5cf" stroke-width="8" stroke-dasharray="6 9"/>
<path d="M124 110L186 158" stroke="#8a8b99" stroke-width="5"/>
<path d="M140 100L192 140" stroke="#54525f" stroke-width="6"/>
<path d="M140 100L192 140" stroke="#d5d3dd" stroke-width="6" stroke-dasharray="8 8"/>
</g>
<path d="M122 146l40 32h-20l-28-24z" fill="#26262d"/>
</g>
<!-- cable coil -->
<path d="M138 0h24l8 72h-16z" fill="#39435a" opacity=".7" filter="url(#b1)"/>
<g fill="none" stroke="#91a6c6" stroke-width="2.200" filter="url(#b1)"><path d="M137 5c7-4 16-4 23 0M137 12c7-4 16-4 23 0M138 19c7-4 16-4 23 0M140 26c7-4 16-3 22 1M142 33c7-4 15-3 21 1M144 40c7-3 15-2 20 2M146 47c7-3 14-2 19 2M149 54c6-3 13-1 17 3M152 61c5-2 11-1 15 3M155 68c4-2 9-1 12 2"/></g>
<!-- robot arm head -->
<g filter="url(#b1)"><path d="M160 0h82l-4 30-30 18-28-4-20-26z" fill="url(#t1arm)"/><ellipse cx="198" cy="14" rx="45" ry="35" fill="url(#t1arm)"/><ellipse cx="186" cy="52" rx="22" ry="6" fill="#6f7288" opacity=".55"/><circle cx="163" cy="22" r="3" fill="#3d4354"/><path d="M160 44l32 10-3 8-33-9z" fill="#8388a0"/><path d="M236 0h16v40l-14 6c4-14 4-30-2-46z" fill="#b9a5c4"/></g>
<!-- gripper -->
<g filter="url(#b1)"><path d="M128 50l32 12-8 42-24 18-24-18z" fill="#303035"/><path d="M112 90l26 14-8 18-26-14z" fill="#5e5f68"/><path d="M108 98l18 10-3 6-18-10z" fill="#1f1f24"/><path d="M102 108l14 8-4 14-14-8z" fill="#d8d9e0"/><path d="M118 60l12-6 6 8-8 10z" fill="#74767f"/><path d="M150 62l10 4-6 30-8-4z" fill="#4c4d57"/></g>
<rect width="252" height="178" fill="url(#t1pk)"/>
</svg>
<!-- thumb 2 : mobility -->
<svg style="left:1338.5px;top:891px;overflow:hidden" width="251.500" height="177.500" viewBox="0 0 252 178" preserveAspectRatio="none">
<defs>
<linearGradient id="t2bg" x1="0" y1="0" x2="0" y2="1"><stop offset="0" stop-color="#2a4258"/><stop offset=".045" stop-color="#3a5d78"/><stop offset=".085" stop-color="#6493ad"/><stop offset=".13" stop-color="#35546e"/><stop offset=".2" stop-color="#2d465e"/><stop offset=".34" stop-color="#314c64"/><stop offset=".48" stop-color="#3c5c72"/><stop offset=".56" stop-color="#5b8796"/><stop offset=".6" stop-color="#86b9c0"/><stop offset=".66" stop-color="#6799a5"/><stop offset=".74" stop-color="#466a7c"/><stop offset=".84" stop-color="#38556a"/><stop offset="1" stop-color="#3a5a74"/></linearGradient>
<linearGradient id="t2pk" x1="0" y1="0" x2="1.193" y2=".642"><stop offset="0" stop-color="#e683c0" stop-opacity="0"/><stop offset=".42" stop-color="#e683c0" stop-opacity="0"/><stop offset=".58" stop-color="#dd88c2" stop-opacity=".15"/><stop offset=".72" stop-color="#e085c1" stop-opacity=".4"/><stop offset=".86" stop-color="#e884c2" stop-opacity=".75"/><stop offset="1" stop-color="#f083c5" stop-opacity=".98"/></linearGradient>
<radialGradient id="t2wh" cx=".5" cy=".5" r=".5"><stop offset="0" stop-color="#8088a8"/><stop offset=".14" stop-color="#4a4f6c"/><stop offset=".4" stop-color="#5d6283"/><stop offset=".64" stop-color="#535c7c"/><stop offset=".7" stop-color="#2c3850"/><stop offset=".8" stop-color="#3d6a88"/><stop offset=".9" stop-color="#84c4dc"/><stop offset=".96" stop-color="#5f9cb8"/><stop offset="1" stop-color="#3a607a" stop-opacity=".2"/></radialGradient>
<linearGradient id="t2hood" x1="0" y1="0" x2="1" y2="0"><stop offset="0" stop-color="#a9cbd8"/><stop offset=".4" stop-color="#6f93aa"/><stop offset="1" stop-color="#675f8a"/></linearGradient>
<filter id="c1"><feGaussianBlur stdDeviation=".9"/></filter>
<filter id="c3"><feGaussianBlur stdDeviation="3"/></filter>
<filter id="c6"><feGaussianBlur stdDeviation="6"/></filter>
</defs>
<rect width="252" height="178" fill="url(#t2bg)"/>
<g filter="url(#c1)" fill="#7fb0c8"><rect x="0" y="22" width="150" height="2.500" opacity=".4"/><rect x="118" y="32" width="40" height="2.200" opacity=".7"/><rect x="160" y="31" width="40" height="1.600" opacity=".5"/><rect x="0" y="41" width="252" height="2.500" opacity=".28"/><rect x="66" y="48" width="52" height="2.600" opacity=".6"/><rect x="0" y="58" width="190" height="2" opacity=".22"/><rect x="0" y="66" width="100" height="2" opacity=".2"/></g>
<rect x="120" y="60" width="140" height="80" fill="#3a4f66" filter="url(#c6)"/>
<ellipse cx="36" cy="108" rx="80" ry="17" fill="#8fc4c8" opacity=".55" filter="url(#c6)"/><ellipse cx="30" cy="103" rx="70" ry="4.500" fill="#c9eeee" opacity=".6" filter="url(#c3)"/><ellipse cx="60" cy="120" rx="50" ry="4" fill="#a9dada" opacity=".35" filter="url(#c3)"/>
<!-- car body -->
<g filter="url(#c1)">
<path d="M252 30c-18 7-34 16-50 28-30 5-68 10-96 22-14 6-21 12-21 20l2 24c0 8 6 12 16 14l149 4z" fill="#1b2433"/>
<path d="M252 36c-16 6-30 14-44 25l44-5z" fill="#3a4562"/>
<path d="M202 59c-30 5-66 9-94 21-10 4-17 9-21 15 32-16 80-24 165-29v-11z" fill="url(#t2hood)"/>
<path d="M87 96c7-7 20-11 33-11l-5 10c-9 2-19 4-28 7z" fill="#c9e2ea"/>
<path d="M86 104c8-3 18-5 26-6l-1 10-24 6z" fill="#161c28"/>
<path d="M82 130l40 8v4l-40-6z" fill="#10141c"/>
<path d="M184 74l68-6v66l-64-2z" fill="#2e3550"/>
<path d="M186 86c14-4 40-8 66-6v10c-24-2-50 2-66 8z" fill="#141a28"/>
<path d="M222 56c6-3 12-3 16 0l-2 10h-14z" fill="#1a2030"/>
</g>
<circle cx="148" cy="118" r="32" fill="url(#t2wh)" filter="url(#c1)"/>
<g stroke="#3a3f5a" stroke-width="2.500" opacity=".7" filter="url(#c1)"><path d="M148 100v36M130 118h36M135 105l26 26M161 105l-26 26"/></g>
<rect x="0" y="146" width="252" height="4" fill="#2c4356" opacity=".5" filter="url(#c3)"/>
<rect width="252" height="178" fill="url(#t2pk)"/>
</svg>
<!-- thumb 3 : chemistry -->
<svg style="left:1623px;top:891px;overflow:hidden" width="251.500" height="177.500" viewBox="0 0 252 178" preserveAspectRatio="none">
<defs>
<linearGradient id="t3bg" x1="0" y1="0" x2="1" y2=".25"><stop offset="0" stop-color="#c3d7d7"/><stop offset=".45" stop-color="#d2e0e1"/><stop offset=".8" stop-color="#d9dde4"/><stop offset="1" stop-color="#dccfe0"/></linearGradient>
<linearGradient id="t3pk" x1="0" y1="0" x2="1.193" y2=".642"><stop offset="0" stop-color="#e683c0" stop-opacity="0"/><stop offset=".42" stop-color="#e683c0" stop-opacity="0"/><stop offset=".58" stop-color="#dd88c2" stop-opacity=".15"/><stop offset=".72" stop-color="#e085c1" stop-opacity=".4"/><stop offset=".86" stop-color="#e884c2" stop-opacity=".75"/><stop offset="1" stop-color="#f083c5" stop-opacity=".98"/></linearGradient>
<radialGradient id="s1" cx=".56" cy=".46" r=".56"><stop offset="0" stop-color="#e2eff1"/><stop offset=".4" stop-color="#b5d5da"/><stop offset=".7" stop-color="#5fa5b0"/><stop offset=".9" stop-color="#2f7888"/><stop offset="1" stop-color="#2a6a7c"/></radialGradient>
<radialGradient id="s2" cx=".5" cy=".5" r=".55"><stop offset="0" stop-color="#d9e9ec"/><stop offset=".45" stop-color="#9cc5cd"/><stop offset=".85" stop-color="#4a909e"/><stop offset="1" stop-color="#39808f"/></radialGradient>
<radialGradient id="s3" cx=".5" cy=".45" r=".55"><stop offset="0" stop-color="#c9dbe4"/><stop offset=".5" stop-color="#86a9ba"/><stop offset="1" stop-color="#53829a"/></radialGradient>
<radialGradient id="s4" cx=".5" cy=".45" r=".55"><stop offset="0" stop-color="#d3cee2"/><stop offset=".6" stop-color="#a9a9c8"/><stop offset="1" stop-color="#7f86ad"/></radialGradient>
<radialGradient id="s5" cx=".5" cy=".5" r=".5"><stop offset="0" stop-color="#c5dde0"/><stop offset=".5" stop-color="#8cb9c2"/><stop offset="1" stop-color="#4f909e"/></radialGradient>
<filter id="d1"><feGaussianBlur stdDeviation=".7"/></filter>
<filter id="d2"><feGaussianBlur stdDeviation="1.800"/></filter>
</defs>
<rect width="252" height="178" fill="url(#t3bg)"/>
<g filter="url(#d2)" stroke="#8fb5bd" stroke-width="3.200" fill="none"><path d="M97 24L94 47L69 58M94 47L109 70M120 92L140 94L152 124"/></g>
<g filter="url(#d2)"><circle cx="97" cy="23" r="7.500" fill="url(#s5)"/><circle cx="94" cy="47" r="9" fill="url(#s5)"/><circle cx="69" cy="58" r="7" fill="url(#s5)"/><circle cx="109" cy="70" r="6" fill="url(#s5)"/><circle cx="120" cy="92" r="6" fill="url(#s5)"/><circle cx="141" cy="94" r="7.500" fill="url(#s5)"/><circle cx="196" cy="8" r="4" fill="#a5bccb"/></g>
<g filter="url(#d2)" stroke="#9fa9c6" stroke-width="4.500" fill="none"><path d="M231 18L206 42L190 50M206 42L218 86L205 120M252 100L205 120M205 120L188 178"/></g>
<g filter="url(#d2)"><circle cx="231" cy="18" r="11" fill="#8fa5c0"/><circle cx="206" cy="42" r="11" fill="#8fa3bf"/><circle cx="218" cy="86" r="10.500" fill="#a3a5c4"/><circle cx="253" cy="92" r="13" fill="#ad9cc2"/><circle cx="190" cy="178" r="12" fill="#c9a6ca"/></g>
<g filter="url(#d1)" stroke-linecap="round" fill="none"><path d="M98 116L128 134" stroke="#7ea5b3" stroke-width="5"/><path d="M172 86L196 112" stroke="#94a9bf" stroke-width="7"/><path d="M156 138L186 128" stroke="#a3a4c2" stroke-width="5"/></g>
<g filter="url(#d1)">
<circle cx="205" cy="121" r="25" fill="url(#s4)"/>
<circle cx="155" cy="60" r="33" fill="url(#s1)"/>
<path d="M126 74c8 15 24 22 40 19 9-2 16-7 20-13-6 22-48 28-60-6z" fill="#3f5a88" opacity=".8"/>
<path d="M128 50c2-12 12-20 24-22-10 6-18 18-16 36-4-2-8-8-8-14z" fill="#2f7f90" opacity=".7"/>
<ellipse cx="152" cy="41" rx="17" ry="6.500" fill="#f1f8f9" opacity=".6" transform="rotate(-16 152 41)"/>
<circle cx="83" cy="108" r="17" fill="url(#s2)"/>
<ellipse cx="81" cy="100" rx="9" ry="5" fill="#eef6f7" opacity=".65"/>
<path d="M68 114c4 8 14 12 24 8-8 10-22 6-24-8z" fill="#2f6f84" opacity=".6"/>
<circle cx="139.500" cy="142" r="20" fill="url(#s3)"/>
<ellipse cx="138" cy="133" rx="10" ry="5" fill="#e7ebf3" opacity=".55"/>
</g>
<rect width="252" height="178" fill="url(#t3pk)"/>
</svg>


<!-- thumb captions -->
<svg style="left:1061.7px;top:949.2px" width="133.0" height="24.9"><text x="0" y="18.26" font-family="Liberation Sans, sans-serif" font-size="16.6" font-weight="bold" fill="#fff" textLength="133.0" lengthAdjust="spacing">製造・ものづくり</text></svg>
<div class="a" style="left:1062.3px;top:979.7px;width:43.6px;height:1.4px;background:#fff"></div>
<svg style="left:1262.5px;top:1006.5px" width="29.2" height="38.2"><text x="0" y="28.05" font-family="Liberation Sans, sans-serif" font-size="25.5" font-weight="bold" fill="#fff" textLength="29.2" lengthAdjust="spacing">03</text></svg>
<svg style="left:1263.9px;top:1040.4px" width="26.2" height="15.9"><text x="0" y="11.66" font-family="Liberation Sans, sans-serif" font-size="10.6" font-weight="bold" fill="#fff" textLength="26.2" lengthAdjust="spacing">2025</text></svg>
<div class="a" style="left:1063.0px;top:1060.5px;width:11px;height:3px;background:#3a3a3f;opacity:.75"></div>
<div class="a" style="left:1075.5px;top:1060px;width:10.5px;height:4px;background:#f08020"></div>
<div class="a" style="left:1090.0px;top:1061.5px;width:58px;height:1px;background:#d8d0da;opacity:.65"></div>
<svg style="left:1346.0px;top:949.2px" width="146.8" height="24.9"><text x="0" y="18.26" font-family="Liberation Sans, sans-serif" font-size="16.6" font-weight="bold" fill="#fff" textLength="146.8" lengthAdjust="spacing">自動車・モビリティ</text></svg>
<div class="a" style="left:1346.5px;top:979.7px;width:43.6px;height:1.4px;background:#fff"></div>
<svg style="left:1546.8px;top:1006.5px" width="29.2" height="38.2"><text x="0" y="28.05" font-family="Liberation Sans, sans-serif" font-size="25.5" font-weight="bold" fill="#fff" textLength="29.2" lengthAdjust="spacing">03</text></svg>
<svg style="left:1548.2px;top:1040.4px" width="26.2" height="15.9"><text x="0" y="11.66" font-family="Liberation Sans, sans-serif" font-size="10.6" font-weight="bold" fill="#fff" textLength="26.2" lengthAdjust="spacing">2025</text></svg>
<div class="a" style="left:1347.2px;top:1060.5px;width:11px;height:3px;background:#20283a;opacity:.75"></div>
<div class="a" style="left:1359.8px;top:1060px;width:10.5px;height:4px;background:#f08020"></div>
<div class="a" style="left:1374.2px;top:1061.5px;width:58px;height:1px;background:#c8c0da;opacity:.65"></div>
<svg style="left:1630.2px;top:949.2px" width="87.4" height="24.9"><text x="0" y="18.26" font-family="Liberation Sans, sans-serif" font-size="16.6" font-weight="bold" fill="#fff" textLength="87.4" lengthAdjust="spacing">化学・材料</text></svg>
<div class="a" style="left:1630.8px;top:979.7px;width:43.6px;height:1.4px;background:#fff"></div>
<svg style="left:1831.0px;top:1006.5px" width="29.2" height="38.2"><text x="0" y="28.05" font-family="Liberation Sans, sans-serif" font-size="25.5" font-weight="bold" fill="#fff" textLength="29.2" lengthAdjust="spacing">03</text></svg>
<svg style="left:1832.4px;top:1040.4px" width="26.2" height="15.9"><text x="0" y="11.66" font-family="Liberation Sans, sans-serif" font-size="10.6" font-weight="bold" fill="#fff" textLength="26.2" lengthAdjust="spacing">2025</text></svg>
<div class="a" style="left:1631.5px;top:1060.5px;width:11px;height:3px;background:#ffffff;opacity:.75"></div>
<div class="a" style="left:1644.0px;top:1060px;width:10.5px;height:4px;background:#f08020"></div>
<div class="a" style="left:1658.5px;top:1061.5px;width:58px;height:1px;background:#ffffff;opacity:.65"></div>
</body>
</html>
